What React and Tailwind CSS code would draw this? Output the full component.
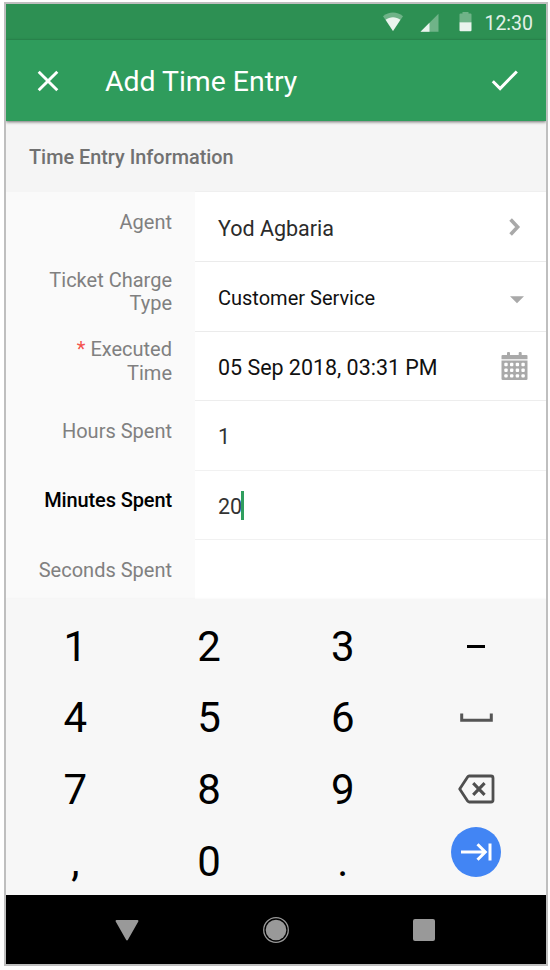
const FIELDS = [
  { label: 'Agent', value: 'Yod Agbaria', icon: 'chevron', row: 'h-[70px] pt-[4px] border-[#ebebeb]', side: 'pt-[19px]', text: 'text-[21.5px] text-[#2b2b2b]' },
  { label: 'Ticket Charge Type', value: 'Customer Service', icon: 'caret', row: 'h-[70px] pt-[2px] border-[#ebebeb]', side: 'pt-[6.5px]', text: 'text-[20px] text-[#111]' },
  { label: 'Executed Time', value: '05 Sep 2018, 03:31 PM', icon: 'calendar', required: true, row: 'h-[69px] pt-[3px] border-[#ededed]', side: 'pt-[6px]', text: 'text-[21.45px] text-[#111]' },
  { label: 'Hours Spent', value: '1', row: 'h-[70px] pt-[2px] border-[#f1f1f1]', side: 'pt-[19px]', text: 'text-[21.5px] text-[#333]' },
  { label: 'Minutes Spent', value: '20', focused: true, row: 'h-[69px] pt-[3px] border-[#f1f1f1]', side: 'pt-[18px]', text: 'text-[21.5px] text-[#333]' },
  { label: 'Seconds Spent', value: '', row: 'h-[70px] pt-[3px] border-[#f1f1f1]', side: 'pt-[19px]', text: 'text-[21.5px] text-[#333]' },
];

const KEYS = ['1', '2', '3', 'minus', '4', '5', '6', 'space', '7', '8', '9', 'backspace', ',', '0', '.', 'next'];

const DOTS = [0, 1, 2, 3].flatMap((c) => [0, 1, 2].map((r) => [3.3 + c * 5.7, 11.8 + r * 5.7]));

function FieldIcon({ name }) {
  if (name === 'chevron') {
    return (
      <svg className="w-[12px] h-[18px] mr-[25px] mt-[-3px]" viewBox="0 0 12 18" fill="none" stroke="#a9a9a9" strokeWidth="3.6">
        <path d="M1.6 1.6l7 7.4-7 7.4" />
      </svg>
    );
  }
  if (name === 'caret') {
    return (
      <svg className="w-[14px] h-[8px] mr-[22px] mt-[4px]" viewBox="0 0 14 8" fill="#a9a9a9">
        <path d="M0 0.3h14L7 7.3z" />
      </svg>
    );
  }
  return (
    <svg className="w-[27px] h-[30px] mr-[18px] mt-[-3px]" viewBox="0 0 27 30" fill="#a9a9a9">
      <rect x="6" y="1" width="3" height="5" rx="1" />
      <rect x="17.7" y="1" width="3" height="5" rx="1" />
      <path d="M.5 5a1 1 0 0 1 1-1h24a1 1 0 0 1 1 1v3.3H.5z" />
      <path d="M.5 9.5h26v18.3a1.3 1.3 0 0 1-1.3 1.3H1.8a1.3 1.3 0 0 1-1.3-1.3z" />
      {DOTS.map(([x, y]) => (
        <rect key={`${x}-${y}`} x={x} y={y} width="3.4" height="3.4" rx="1" fill="#fff" />
      ))}
    </svg>
  );
}

function Field({ label, value, icon, required, focused, row, side, text }) {
  return (
    <div className="flex shrink-0">
      <div className={`w-[189px] shrink-0 flex items-start justify-end pr-[23px] bg-[#fafafa] ${side}`}>
        <div className={`w-[140px] text-right text-[20px] leading-[23.5px] ${focused ? 'font-medium text-black tracking-[-0.12px]' : 'text-[#808080]'}`}>
          {required && <span className="text-[#f4524d]">* </span>}
          {label}
        </div>
      </div>
      <div className={`flex-1 flex items-center justify-between border-b bg-white pl-[23px] ${row}`}>
        <div className="flex items-center">
          <span className={`leading-[28px] whitespace-nowrap ${text}`}>{value}</span>
          {focused && <span className="w-[3px] h-[29px] mt-[-2px] ml-[-1px] bg-[#2f9e5e]" />}
        </div>
        {icon && <FieldIcon name={icon} />}
      </div>
    </div>
  );
}

function Key({ name }) {
  switch (name) {
    case 'minus':
      return <span className="w-[18px] h-[3.5px] mt-[-1px] bg-black" />;
    case 'space':
      return (
        <svg className="w-[33px] h-[9px] mt-[-1px]" viewBox="0 0 33 9" fill="none" stroke="#555" strokeWidth="3">
          <path d="M1.7 0.5v6.7h29.6V0.5" />
        </svg>
      );
    case 'backspace':
      return (
        <svg className="w-[37px] h-[30px] mt-[-1px]" viewBox="0 0 37 30" fill="none" stroke="#4f4f4f" strokeWidth="2.8" strokeLinejoin="round">
          <path d="M11.2 2h21.8a2 2 0 0 1 2 2v22a2 2 0 0 1-2 2H11.2a2 2 0 0 1-1.6-.9L1.7 15l7.9-12.1a2 2 0 0 1 1.6-.9z" />
          <path d="M15.2 9.2l11.4 11.6M26.6 9.2L15.2 20.8" strokeWidth="3.1" />
        </svg>
      );
    case 'next':
      return (
        <span className="flex items-center justify-center w-[50px] h-[50px] mt-[-19px] rounded-full bg-[#4285f4]">
          <svg className="w-[32px] h-[20px]" viewBox="0 0 32 20" fill="none" stroke="#fff" strokeWidth="3">
            <path d="M1 10h24M17.5 2.2l7.8 7.8-7.8 7.8M30 1.5v17" />
          </svg>
        </span>
      );
    default:
      return <span className="pl-[1px] text-[42px] leading-[50px] text-black">{name}</span>;
  }
}

export default function App() {
  return (
    <div className="w-[550px] h-[970px] bg-white pl-[4px] pt-[2px] font-['Roboto',sans-serif]">
      <div className="w-[544px] h-[964px] border-2 border-[#bfbfbf] flex flex-col overflow-hidden">

        {/* Status bar */}
        <div className="h-[36px] shrink-0 flex items-center justify-end bg-[#2d9053] pr-[13px]">
          <svg className="w-[20px] h-[20px] mr-[17px]" viewBox="0 0 20 20">
            <path d="M0 4.2C6-.6 14-.6 20 4.2L10 19z" fill="#6fb388" />
            <path d="M2.6 7.8C7 4.4 13 4.4 17.4 7.8L10 19z" fill="#eaf4ee" />
          </svg>
          <svg className="w-[19px] h-[19px] mr-[20px]" viewBox="0 0 19 19">
            <path d="M18.5 .8v18H.5z" fill="#6fb388" />
            <path d="M9.5 9.8v9h-9z" fill="#eaf4ee" />
          </svg>
          <svg className="w-[13px] h-[20px] mr-[12px]" viewBox="0 0 13 20">
            <path d="M3.5 0h6v1.6h2a1 1 0 0 1 1 1v7.6H.5V2.6a1 1 0 0 1 1-1h2z" fill="#6fb388" />
            <path d="M.5 10.2h12v8a1 1 0 0 1-1 1h-10a1 1 0 0 1-1-1z" fill="#eaf4ee" />
          </svg>
          <span className="text-[19.5px] leading-[24px] pt-[4px] text-[#e3f1e8]">12:30</span>
        </div>

        {/* App bar */}
        <header className="relative h-[81px] shrink-0 flex items-center bg-[#2f9c5c] shadow-[0_1px_3px_rgba(0,0,0,0.55)]">
          <svg className="w-[22px] h-[22px] ml-[31px]" viewBox="0 0 22 22" fill="none" stroke="#fff" strokeWidth="2.9">
            <path d="M1.7 1.7l18.6 18.6M20.3 1.7l-18.6 18.6" />
          </svg>
          <h1 className="ml-[46px] pt-[2px] text-[28.4px] leading-[34px] text-white">Add Time Entry</h1>
          <svg className="w-[27px] h-[21px] ml-auto mr-[28px]" viewBox="0 0 27 21" fill="none" stroke="#fff" strokeWidth="3">
            <path d="M1.8 11.2l7.3 7.3L25.8 1.5" />
          </svg>
        </header>

        {/* Form */}
        <main className="h-[478px] shrink-0 flex flex-col overflow-hidden">
          <div className="h-[71px] shrink-0 flex bg-[#f5f5f5]">
            <h2 className="w-[189px] shrink-0 self-center pl-[23px] pt-[2px] text-[19.85px] leading-[24px] font-medium text-[#717171] whitespace-nowrap">
              Time Entry Information
            </h2>
            <div className="flex-1 border-b border-[#efefef]" />
          </div>
          {FIELDS.map((field) => (
            <Field key={field.label} {...field} />
          ))}
        </main>

        {/* Keyboard */}
        <div className="relative h-[296px] shrink-0 grid grid-cols-4 grid-rows-[repeat(4,71.6px)] pl-[2px] pr-[3px] pt-[12px] bg-[#f7f7f7] shadow-[0_0_2px_rgba(0,0,0,0.06)]">
          {KEYS.map((key) => (
            <div key={key} className="flex items-center justify-center">
              <Key name={key} />
            </div>
          ))}
        </div>

        {/* Navigation bar */}
        <nav className="h-[69px] shrink-0 flex items-center bg-black">
          <svg className="w-[24px] h-[22px] ml-[109px]" viewBox="0 0 24 22" fill="#999">
            <path d="M1.5 1h21a.9.9 0 0 1 .8 1.4L12.8 21a.9.9 0 0 1-1.6 0L.7 2.4A.9.9 0 0 1 1.5 1z" />
          </svg>
          <svg className="w-[28px] h-[28px] ml-[123px]" viewBox="0 0 28 28">
            <circle cx="14" cy="14" r="12.3" fill="none" stroke="#999" strokeWidth="1.3" />
            <circle cx="14" cy="14" r="10.3" fill="#999" />
          </svg>
          <span className="w-[22px] h-[22px] ml-[123px] rounded-[2px] bg-[#999]" />
        </nav>
      </div>
    </div>
  );
}
